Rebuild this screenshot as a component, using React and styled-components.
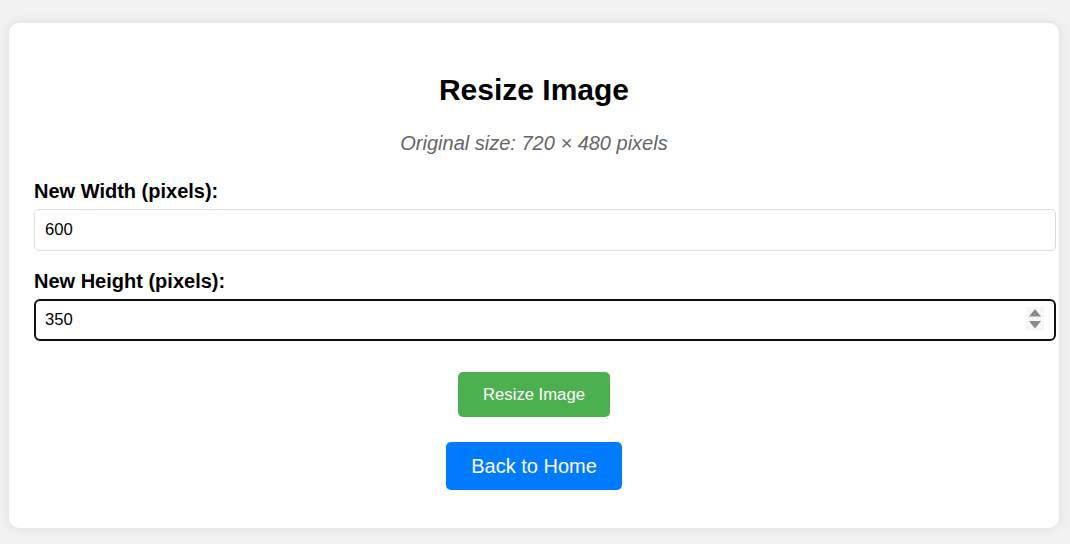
import React, { useState } from "react";
import styled, { createGlobalStyle } from "styled-components";

const GlobalStyle = createGlobalStyle`
  html, body {
    margin: 0;
    padding: 0;
    background: #f2f2f2;
    font-family: "Liberation Sans", Arial, sans-serif;
  }
  body {
    padding: 23px 11px 16px 9px;
  }
`;

const Card = styled.div`
  background: #ffffff;
  border-radius: 10px;
  box-shadow: 0 0 12px rgba(0, 0, 0, 0.1);
  padding: 25px;
  width: 1000px;
`;

const Title = styled.h2`
  margin: 25px 0 25px;
  font-size: 30px;
  font-weight: bold;
  text-align: center;
  color: #000;
`;

const Subtitle = styled.p`
  margin: 0 0 25px;
  font-size: 20px;
  font-style: italic;
  text-align: center;
  color: #666666;
`;

const Field = styled.div`
  display: flex;
  flex-direction: column;
  align-items: flex-start;
  margin-bottom: ${(p) => p.$gap}px;
`;

const Label = styled.label`
  display: block;
  font-size: 20px;
  font-weight: bold;
  color: #000;
  margin-bottom: 6px;
`;

const InputWrap = styled.div`
  position: relative;
`;

const Input = styled.input`
  box-sizing: content-box;
  width: 1000px;
  padding: 10px;
  font-family: "Liberation Sans", Arial, sans-serif;
  font-size: 16.67px;
  color: #000;
  border: 1px solid #dddddd;
  border-radius: 5px;
  margin: 0;
  background: #fff;
  -moz-appearance: textfield;
  &::-webkit-inner-spin-button,
  &::-webkit-outer-spin-button {
    -webkit-appearance: none;
    margin: 0;
  }
`;

const Spinner = styled.svg`
  position: absolute;
  right: 12px;
  top: 8px;
  width: 18px;
  height: 24px;
  pointer-events: none;
`;

const Actions = styled.div`
  display: flex;
  flex-direction: column;
  align-items: center;
  gap: 25px;
  margin-top: 31px;
  margin-bottom: 13px;
`;

const Button = styled.button`
  border: none;
  border-radius: 5px;
  color: #fff;
  cursor: pointer;
  font-family: "Liberation Sans", Arial, sans-serif;
  background: ${(p) => p.$bg};
  font-size: ${(p) => p.$size}px;
  padding: ${(p) => p.$pad};
`;

export default function App() {
  const [w, setW] = useState("600");
  const [h, setH] = useState("350");
  return (
    <>
      <GlobalStyle />
      <Card>
        <Title>Resize Image</Title>
        <Subtitle>Original size: 720 × 480 pixels</Subtitle>
        <Field $gap={19}>
          <Label htmlFor="w">New Width (pixels):</Label>
          <Input id="w" type="number" value={w} onChange={(e) => setW(e.target.value)} />
        </Field>
        <Field $gap={0}>
          <Label htmlFor="h">New Height (pixels):</Label>
          <InputWrap>
            <Input id="h" type="number" autoFocus value={h} onChange={(e) => setH(e.target.value)} />
            <Spinner viewBox="0 0 18 24" aria-hidden="true">
              <rect x="0" y="0" width="18" height="24" fill="#f7f7f7" />
              <path d="M9 2 L15 9.5 L3 9.5 Z" fill="#8a8a8a" />
              <path d="M3 14 L15 14 L9 21.5 Z" fill="#8a8a8a" />
            </Spinner>
          </InputWrap>
        </Field>
        <Actions>
          <Button $bg="#4caf50" $size={16.67} $pad="12.5px 25px">Resize Image</Button>
          <Button $bg="#007bff" $size={20} $pad="12.5px 25px">Back to Home</Button>
        </Actions>
      </Card>
    </>
  );
}
